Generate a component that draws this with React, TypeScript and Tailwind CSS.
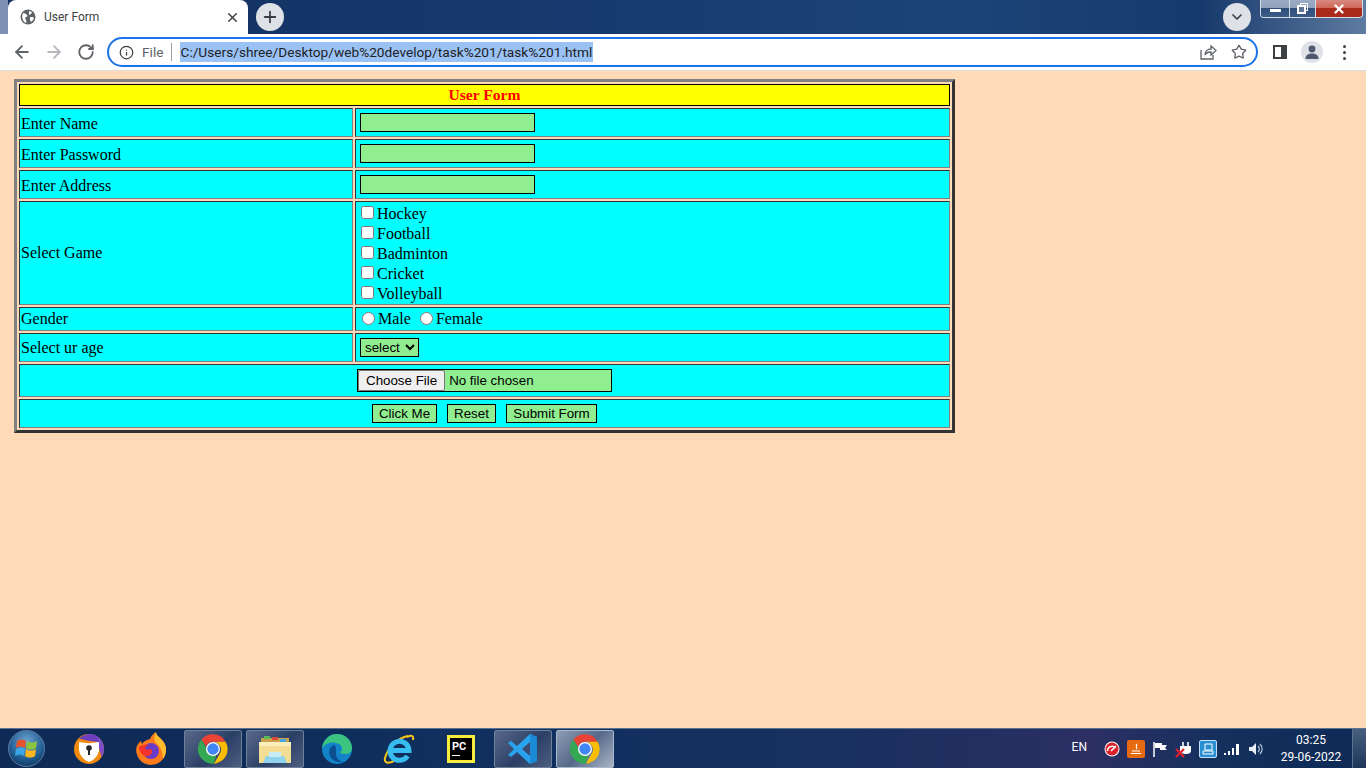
import { ArrowLeft, ArrowRight, ChevronDown, Info, Plus, RotateCw, Star, X } from "lucide-react";

const games = ["Hockey", "Football", "Badminton", "Cricket", "Volleyball"];
const fieldRows = ["Enter Name", "Enter Password", "Enter Address"];

const cell = "border border-t-[#333] border-l-[#333] border-r-[#808080] border-b-[#808080] bg-[#00ffff] p-px";
const control = "border border-black bg-[#90ee90] font-['Liberation_Sans',sans-serif] text-[13.33px] text-black";
const capButton = "flex items-center justify-center border-r border-[#d5dde8] bg-[linear-gradient(#9aacc3,#8fa2bb_50%,#30507c_50%,#3c5b86)]";

function ChromeLogo({ size = 32 }: { size?: number }) {
  return (
    <svg width={size} height={size} viewBox="0 0 48 48">
      <path d="M24 2a22 22 0 0 1 19 11H24a11 11 0 0 0-10.4 7.4L6.6 9.8A22 22 0 0 1 24 2z" fill="#ea4335" />
      <path d="M43 13a22 22 0 0 1-17.6 33l9.6-16.6A11 11 0 0 0 33 17.5 11 11 0 0 0 24 13z" fill="#fbbc04" />
      <path d="M6.6 9.8l9.8 17A9 9 0 0 0 30 29.4L25.4 46A22 22 0 0 1 6.6 9.8z" fill="#34a853" />
      <circle cx="24" cy="24" r="10.5" fill="#fff" />
      <circle cx="24" cy="24" r="8.5" fill="#4285f4" />
    </svg>
  );
}

function WindowsOrb() {
  return (
    <div className="flex h-[37px] w-[37px] items-center justify-center rounded-full border border-[#5d7fa5] bg-[radial-gradient(circle_at_50%_30%,#6ba3d0,#1f5a8f_60%,#0b2747)]">
      <svg width="24" height="22" viewBox="0 0 24 22">
        <path d="M2 3c3-2 6-2 9 0l-1 7c-3-2-6-2-9 0z" fill="#e8532b" />
        <path d="M12 3c3 2 6 2 10 0l-1 7c-3 2-7 2-10 0z" fill="#8cc63e" />
        <path d="M1 11c3-2 6-2 9 0l-1 7c-3-2-6-2-9 0z" fill="#39a6e8" />
        <path d="M11 11c3 2 7 2 10 0l-1 7c-3 2-7 2-10 0z" fill="#fcb71e" />
      </svg>
    </div>
  );
}

function SecureBrowserLogo() {
  return (
    <svg width="30" height="30" viewBox="0 0 30 30">
      <circle cx="15" cy="15" r="15" fill="#f28a0f" />
      <path d="M15 0a15 15 0 0 1 15 15c0 3-1 6-2.500 8L23 7z" fill="#7a4fc9" />
      <path d="M5 4.500A15 15 0 0 1 23 2l2 6-10-1z" fill="#6b3fc0" />
      <path d="M5 8c6 1.500 13 1.500 20 0v8c-1 6-5 10-10 12-5-2-9-6-10-12z" fill="#fff" />
      <circle cx="15" cy="14" r="2.800" fill="#25252f" />
      <rect x="14" y="15" width="2" height="6" fill="#25252f" />
    </svg>
  );
}

function FirefoxLogo() {
  return (
    <svg width="32" height="34" viewBox="0 0 32 34">
      <path d="M16 33A15 15 0 0 1 1.500 15C3 12 4 10 6 9l1 3c2-3 5-4 8-5 1-3 3-5 6-7 0 3 2 4 5 7 3 3 5 6 5 11a15 15 0 0 1-15 15z" fill="#ff7a1a" />
      <path d="M21 0c0 3 2 4 5 7 3 3 5 6 5 11 0 3-1 6-3 9 0-8-3-13-8-17-1-4-1-7 1-10z" fill="#ffbd2e" />
      <circle cx="16" cy="19" r="8" fill="#6a3bc4" />
      <path d="M4 15c3-2 6-3 10-2-3 1-4 2-4 4 2 1 4 1 6 0 2 2 1 6-3 7-5 1-9-4-9-9z" fill="#f5332b" />
    </svg>
  );
}

function FolderLogo() {
  return (
    <svg width="34" height="34" viewBox="0 0 34 34">
      <path d="M3 6h28v12H3z" fill="#caa24c" />
      <rect x="6" y="4" width="6" height="3" fill="#5cba57" />
      <rect x="14" y="5" width="6" height="3" fill="#d8493f" />
      <rect x="22" y="7" width="6" height="3" fill="#4aa2e0" />
      <path d="M1 10h32v21H1z" fill="#f3dd93" />
      <path d="M1 10h32v4H1z" fill="#fbeebd" />
      <path d="M8 24h18l3 7H5z" fill="#8fd4ec" />
      <path d="M11 20h12v5H11z" fill="#c7ecf7" />
    </svg>
  );
}

function EdgeLogo() {
  return (
    <svg width="32" height="32" viewBox="0 0 32 32">
      <circle cx="16" cy="16" r="15" fill="#1283c9" />
      <path d="M1 16C2 7 8 1 16 1c8 0 15 6 15 14 0 4-3 6-7 6-3 0-5-1-5-2 3-1 3-6-1-8C12 8 4 9 1 16z" fill="#3bc47f" />
      <path d="M14 12c-5 1-7 6-5 11 2 4 7 7 13 6-4-1-7-4-7-8 0-4 0-7-1-9z" fill="#0b4f8f" />
    </svg>
  );
}

function IeLogo() {
  return (
    <svg width="32" height="34" viewBox="0 0 32 34">
      <path d="M25 4C15 6 5 15 2 26c-1 5 3 6 9 3" fill="none" stroke="#f5c518" strokeWidth="2" />
      <path d="M24 5c4-2 7-2 6 3" fill="none" stroke="#f5c518" strokeWidth="2" />
      <path d="M24.500 24a9.500 9.500 0 1 1 1.500-5.500H9" fill="none" stroke="#38bdf0" strokeWidth="5" />
    </svg>
  );
}

function VsCodeLogo() {
  return (
    <svg width="32" height="32" viewBox="0 0 32 32">
      <path d="M23 1l7 3v24l-7 3L10 19l-6 5-3-2 6-6-6-6 3-2 6 5z" fill="#2aa3ee" />
      <path d="M23 1l7 3v24l-7 3z" fill="#1a8ad8" />
      <path d="M23 9l-8 7 8 7z" fill="#3a4c70" />
    </svg>
  );
}

function TaskSlot({ active, lit, children }: { active?: boolean; lit?: boolean; children: React.ReactNode }) {
  return (
    <div
      className={
        "flex h-[38px] w-[58px] shrink-0 items-center justify-center rounded-[2px] " +
        (lit
          ? "border border-[#a9b8ca] bg-[linear-gradient(135deg,#8e9db3,#56698a_50%,#aab5c6)]"
          : active
            ? "border border-[#6f8299] bg-[linear-gradient(135deg,#59698a,#2b3f66_55%,#4d5f80)]"
            : "")
      }
    >
      {children}
    </div>
  );
}

function TrayIcons() {
  return (
    <div className="flex items-center gap-[6px]">
      <svg width="18" height="18" viewBox="0 0 18 18">
        <circle cx="9" cy="9" r="7.500" fill="#fff" />
        <circle cx="9" cy="9" r="6.500" fill="#d9202c" />
        <path d="M4.500 11a4.500 4.500 0 0 1 8-3M8 11l5-5" fill="none" stroke="#fff" strokeWidth="1.500" />
      </svg>
      <div className="flex h-[18px] w-[18px] items-center justify-center rounded-[2px] bg-[#e66a12]">
        <svg width="14" height="14" viewBox="0 0 14 14">
          <path d="M2 11.500h10M3 9h8M7 2c2 2-1 3 1 5" fill="none" stroke="#fff" strokeWidth="1.200" />
        </svg>
      </div>
      <svg width="18" height="18" viewBox="0 0 18 18">
        <path d="M3 2v15" stroke="#fff" strokeWidth="1.500" />
        <path d="M4 3h7v2h5l-2 3 2 2H9V8H4z" fill="#fff" />
      </svg>
      <svg width="18" height="18" viewBox="0 0 18 18">
        <path d="M5 6h11v5c0 2-2 3-5 3s-6-1-6-3z" fill="#fff" />
        <path d="M8 2v4M13 2v4" stroke="#fff" strokeWidth="1.600" />
        <path d="M1 9l8 8M9 9l-8 8" stroke="#e5202e" strokeWidth="2.200" />
      </svg>
      <div className="flex h-[18px] w-[18px] items-center justify-center rounded-[2px] border border-[#bfe4f7] bg-[#2a8fd0]">
        <svg width="12" height="12" viewBox="0 0 12 12">
          <path d="M3 1h7v6H3zM1 8h10v3H1z" fill="none" stroke="#fff" />
        </svg>
      </div>
      <svg width="18" height="18" viewBox="0 0 18 18" fill="#fff">
        <rect x="1" y="13" width="2" height="2" />
        <rect x="5" y="11" width="2" height="4" />
        <rect x="9" y="8" width="2" height="7" />
        <rect x="13" y="4" width="3" height="11" />
      </svg>
      <svg width="18" height="18" viewBox="0 0 18 18">
        <path d="M2 7h3l4-4v12l-4-4H2z" fill="#e8eef5" />
        <path d="M11 6a4 4 0 0 1 0 6M13 4a7 7 0 0 1 0 10" fill="none" stroke="#b8c6d6" strokeWidth="1.200" />
      </svg>
    </div>
  );
}

export default function App() {
  return (
    <div className="flex h-screen w-[1366px] flex-col overflow-hidden bg-[#ffdab9] font-['Liberation_Serif',serif] text-base leading-[18px] text-black">
      {/* tab strip */}
      <div className="flex h-[34px] shrink-0 items-start bg-[linear-gradient(90deg,#7b90b2_0,#7b90b2_8px,#12305f_8px,#173a70_45%,#1c4478_70%,#173a6c_88%,#5e7ba1_100%)] pl-2">
        <div className="flex h-[34px] w-[240px] items-center rounded-t-lg bg-white pl-3 pr-2 font-['Roboto',sans-serif] text-xs text-[#3c4043]">
          <svg width="16" height="16" viewBox="0 0 16 16" className="mr-2 shrink-0">
            <circle cx="8" cy="8" r="7.500" fill="#5f6368" />
            <path d="M3 4c2 0 3 1 4 2s0 2-1 2-1 2 0 3 0 3 0 3C3 13 1 8 3 4zM9 2l3 1-1 2-2 1zM10 8h3l1 2-3 3-1-2z" fill="#fff" />
          </svg>
          <span className="flex-1">User Form</span>
          <X size={15} strokeWidth={2.4} className="text-[#3c4043]" />
        </div>
        <div className="ml-2 mt-[3px] flex h-7 w-7 items-center justify-center rounded-full bg-[#dee1e6]">
          <Plus size={18} strokeWidth={2.4} className="text-[#3c4043]" />
        </div>
        <div className="ml-auto mr-[9px] mt-[3px] flex h-7 w-7 items-center justify-center rounded-full bg-[#dee1e6]">
          <ChevronDown size={16} strokeWidth={2.6} className="text-[#3c4043]" />
        </div>
        <div className="mr-[3px] flex h-[18px] w-[103px] overflow-hidden rounded-b-[4px] border border-t-0 border-[#d5dde8] text-white">
          <div className={capButton + " w-[29px]"}>
            <div className="mt-1 h-[3px] w-[11px] bg-white" />
          </div>
          <div className={capButton + " relative w-[26px]"}>
            <div className="absolute left-[10px] top-[3px] h-[8px] w-[8px] border border-white" />
            <div className="absolute left-[7px] top-[5px] h-[9px] w-[9px] border-2 border-white bg-[#5d769a]" />
          </div>
          <div className="flex flex-1 items-center justify-center bg-[linear-gradient(#d68a80,#cf6253_50%,#a92b1b_50%)]">
            <X size={14} strokeWidth={4} />
          </div>
        </div>
      </div>

      {/* toolbar */}
      <div className="flex h-9 shrink-0 items-center bg-white pl-3 text-[#5f6368]">
        <ArrowLeft size={20} strokeWidth={2.2} />
        <ArrowRight size={20} strokeWidth={2.2} className="ml-3 text-[#b6b9bd]" />
        <RotateCw size={18} strokeWidth={2.4} className="ml-[13px]" />
        <div className="ml-3 flex h-[30px] w-[1151px] items-center rounded-full border-2 border-[#1a73e8] pl-[10px] pr-[9px] font-['Roboto',sans-serif] text-[13.7px]">
          <Info size={15} strokeWidth={2} className="text-[#3c4043]" />
          <span className="ml-2 text-[#5f6368]">File</span>
          <div className="ml-2 mr-2 h-[18px] w-px bg-[#9aa0a6]" />
          <span className="flex h-[20px] w-[413px] items-center whitespace-nowrap bg-[#9bc2f5] text-[#202124]">C:/Users/shree/Desktop/web%20develop/task%201/task%201.html</span>
          <svg width="18" height="18" viewBox="0 0 18 18" fill="none" stroke="#5f6368" strokeWidth="1.300" className="ml-auto mr-[14px]">
            <path d="M2 7v9h12v-4" />
            <path d="M6 12c0-4 3-6 6-6V3l5 4.500L12 12V9c-3 0-5 1-6 3z" />
          </svg>
          <Star size={16} strokeWidth={2} className="text-[#5f6368]" />
        </div>
        <div className="ml-[15px] h-[14px] w-[14px] border-2 border-r-[6px] border-[#3c4043]" />
        <div className="ml-[14px] flex h-[22px] w-[22px] items-center justify-center overflow-hidden rounded-full bg-[#dee1e6]">
          <svg width="16" height="16" viewBox="0 0 16 16" fill="#4f5a6e">
            <circle cx="8" cy="5" r="3.400" />
            <path d="M1.500 15c0-4 3-5.500 6.500-5.500s6.500 1.500 6.500 5.500z" />
          </svg>
        </div>
        <div className="ml-5 flex flex-col gap-[3px]">
          <div className="h-[3px] w-[3px] rounded-full bg-[#3c4043]" />
          <div className="h-[3px] w-[3px] rounded-full bg-[#3c4043]" />
          <div className="h-[3px] w-[3px] rounded-full bg-[#3c4043]" />
        </div>
      </div>
      <div className="h-px shrink-0 bg-[#dadce0]" />

      {/* page */}
      <div className="flex-1 pl-[14px] pt-2">
        <table className="w-[941px] border-separate border-spacing-[2px] border-[3px] border-t-[#808080] border-l-[#808080] border-r-[#333] border-b-[#333] bg-[#ffdab9]">
          <tbody>
            <tr className="h-[22px]">
              <td colSpan={2} className="border border-black bg-[#ffff00] p-0 text-center text-[15.6px] font-bold leading-none text-[#ff0000]">
                User Form
              </td>
            </tr>
            {fieldRows.map((label) => (
              <tr key={label} className="h-[29px]">
                <td className={cell + " w-[334px]"}>
                  <div className="pt-[2px]">{label}</div>
                </td>
                <td className={cell}>
                  <div className="flex pl-[3px]">
                    <input className={control + " h-[19px] w-[175px]"} />
                  </div>
                </td>
              </tr>
            ))}
            <tr className="h-[104px]">
              <td className={cell}>Select Game</td>
              <td className={cell}>
                <div className="-mb-px flex flex-col pl-1 pt-px">
                  {games.map((game) => (
                    <label key={game} className="flex h-5 items-center">
                      <input type="checkbox" className="mb-1 mr-[3px] h-[13px] w-[13px]" />
                      {game}
                    </label>
                  ))}
                </div>
              </td>
            </tr>
            <tr className="h-6">
              <td className={cell}>Gender</td>
              <td className={cell}>
                <div className="flex items-center pl-[5px]">
                  <input type="radio" name="gender" className="mb-[2px] mr-[3px] h-[13px] w-[13px]" />
                  <span>Male</span>
                  <input type="radio" name="gender" className="mb-[2px] ml-[9px] mr-[3px] h-[13px] w-[13px]" />
                  <span>Female</span>
                </div>
              </td>
            </tr>
            <tr className="h-[29px]">
              <td className={cell}>Select ur age</td>
              <td className={cell}>
                <div className="flex pl-[3px]">
                  <select className={control + " h-[19px] w-[59px]"}>
                    <option>select</option>
                  </select>
                </div>
              </td>
            </tr>
            <tr className="h-[33px]">
              <td colSpan={2} className={cell}>
                <div className="flex justify-center">
                  <input
                    type="file"
                    className={control + " h-[23px] w-[255px] file:mr-1 file:h-[21px] file:cursor-default file:rounded-[2px] file:border file:border-solid file:border-[#767676] file:bg-[#efefef] file:px-[7px] file:text-[13.33px] file:text-black"}
                  />
                </div>
              </td>
            </tr>
            <tr className="h-[29px]">
              <td colSpan={2} className={cell}>
                <div className="flex justify-center gap-[10px]">
                  <button className={control + " h-[19px] w-[65px]"}>Click Me</button>
                  <button className={control + " h-[19px] w-[49px]"}>Reset</button>
                  <button className={control + " h-[19px] w-[91px]"}>Submit Form</button>
                </div>
              </td>
            </tr>
          </tbody>
        </table>
      </div>

      {/* taskbar */}
      <div className="flex h-10 shrink-0 items-center border-t border-[#5b7290] bg-[linear-gradient(90deg,#0e2a56,#10305f_40%,#17305f_60%,#2c2f63_80%,#13305c_90%,#0e2a56)] font-['Roboto',sans-serif] text-white">
        <div className="ml-2 mr-[15px] shrink-0">
          <WindowsOrb />
        </div>
        <div className="flex items-center gap-1">
          <TaskSlot><SecureBrowserLogo /></TaskSlot>
          <TaskSlot><FirefoxLogo /></TaskSlot>
          <TaskSlot active><ChromeLogo /></TaskSlot>
          <TaskSlot active><FolderLogo /></TaskSlot>
          <TaskSlot><EdgeLogo /></TaskSlot>
          <TaskSlot><IeLogo /></TaskSlot>
          <TaskSlot>
            <div className="flex h-7 w-7 flex-col justify-center border-[3px] border-[#f5ec3c] bg-black pl-[2px] text-[11px] font-bold leading-3">
              PC
              <div className="mt-[2px] h-px w-[8px] bg-white" />
            </div>
          </TaskSlot>
          <TaskSlot active><VsCodeLogo /></TaskSlot>
          <TaskSlot lit><ChromeLogo /></TaskSlot>
        </div>
        <span className="mb-1 ml-auto mr-4 text-xs">EN</span>
        <TrayIcons />
        <div className="ml-[10px] flex w-[72px] flex-col items-center text-xs leading-[17px]">
          <span>03:25</span>
          <span>29-06-2022</span>
        </div>
        <div className="ml-[5px] h-full w-[14px] border-l border-[#5b7290] bg-[linear-gradient(#48607f,#1d3558)]" />
      </div>
    </div>
  );
}
